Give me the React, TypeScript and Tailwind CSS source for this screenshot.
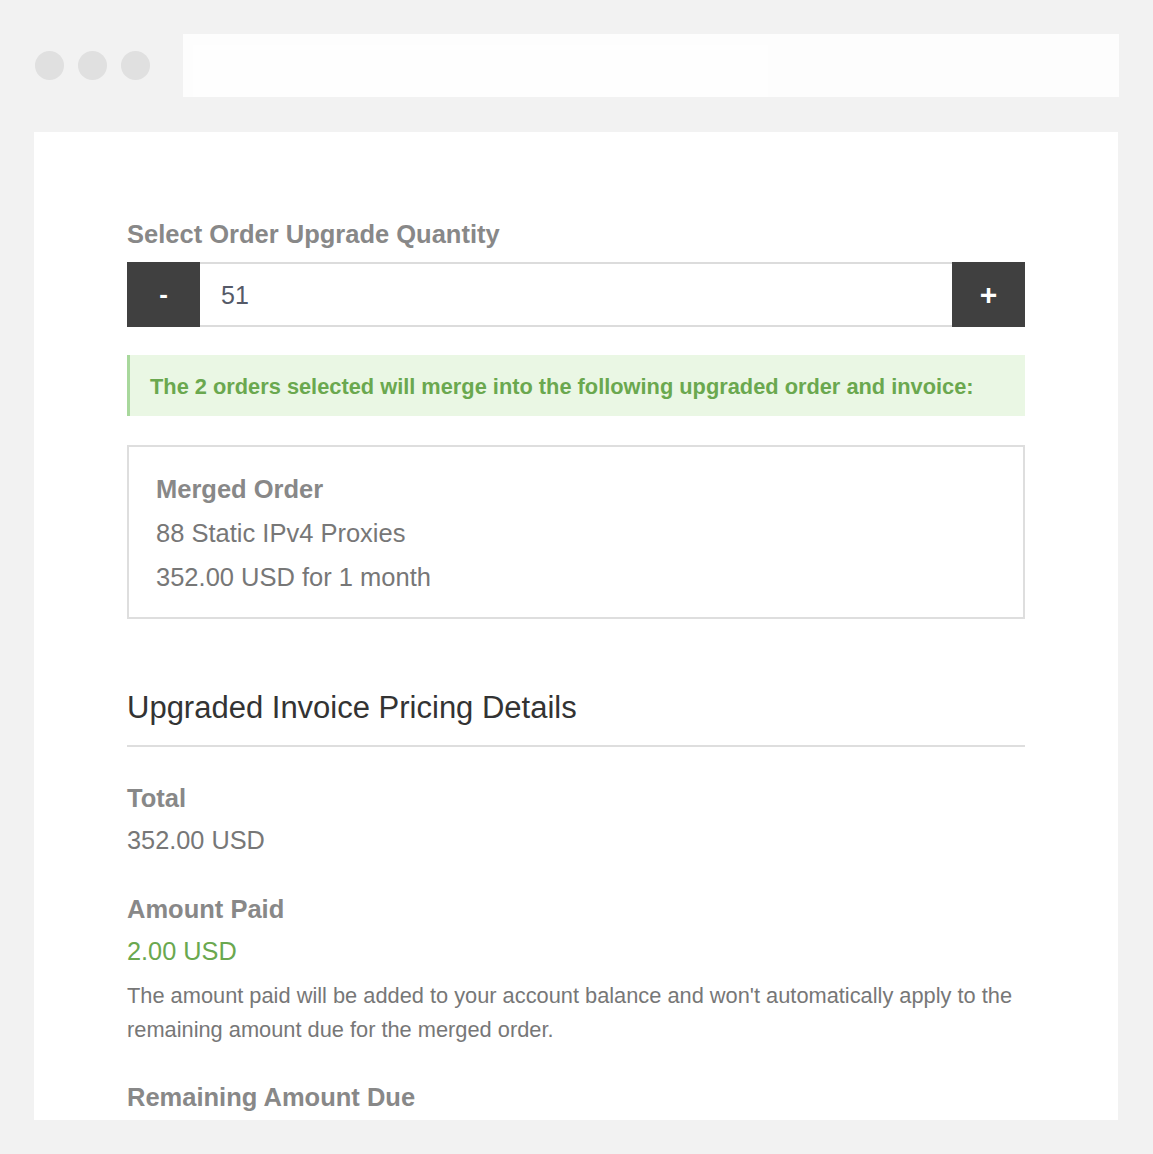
import React from "react";

export default function App() {
  return (
    <div className="min-h-[1154px] w-[1153px] bg-[#f2f2f2] pt-[34px] font-['Liberation_Sans',Arial,sans-serif]">
      <div className="flex items-center h-[63px]">
        <div className="flex items-center gap-[14px] pl-[35px] w-[183px]">
          <div className="w-[29px] h-[29px] rounded-full bg-[#e0e0e0]" />
          <div className="w-[29px] h-[29px] rounded-full bg-[#e0e0e0]" />
          <div className="w-[29px] h-[29px] rounded-full bg-[#e0e0e0]" />
        </div>
        <div className="w-[936px] h-[63px] bg-[#fdfdfd] pt-[11px] pl-[10px]">
          <div className="w-[575px] h-[52px] bg-[#fefefe]" />
        </div>
      </div>
      <div className="ml-[34px] mt-[35px] w-[1084px] h-[988px] bg-white overflow-hidden pl-[93px] pt-[87px]">
        <div className="w-[898px]">
          <div className="text-[25.5px] leading-[30px] font-bold text-[#888]">Select Order Upgrade Quantity</div>
          <div className="mt-[13px] flex h-[65px]">
            <div className="w-[73px] h-full bg-[#404040] flex items-center justify-center text-white text-[26px] font-bold">-</div>
            <div className="flex-1 border-y-2 border-[#dcdcdc] flex items-center pl-[21px] pt-[2px] text-[25px] text-[#555a68]">51</div>
            <div className="w-[73px] h-full bg-[#404040] flex items-center justify-center text-white text-[30px] font-bold">+</div>
          </div>
          <div className="mt-[28px] h-[61px] bg-[#eaf7e4] border-l-[3px] border-[#a8d89c] flex items-center pl-[20px] pt-[3px] text-[21.8px] font-bold text-[#6aa84f]">
            The 2 orders selected will merge into the following upgraded order and invoice:
          </div>
          <div className="mt-[29px] h-[174px] border-2 border-[#dedede] pl-[27px] pt-[20px] text-[25.5px] text-[#777]">
            <div className="font-bold leading-[44px] text-[#888]">Merged Order</div>
            <div className="leading-[44px]">88 Static IPv4 Proxies</div>
            <div className="leading-[44px]">352.00 USD for 1 month</div>
          </div>
          <div className="mt-[69px] text-[31px] leading-[40px] text-[#333]">Upgraded Invoice Pricing Details</div>
          <div className="mt-[17px] h-[2px] bg-[#dedede]" />
          <div className="mt-[34px] text-[25.5px] leading-[34px] font-bold text-[#888]">Total</div>
          <div className="mt-[8px] text-[25.3px] leading-[34px] text-[#777]">352.00 USD</div>
          <div className="mt-[35px] text-[25.5px] leading-[34px] font-bold text-[#888]">Amount Paid</div>
          <div className="mt-[8px] text-[25.3px] leading-[34px] text-[#6aa84f]">2.00 USD</div>
          <div className="mt-[11px] text-[21.8px] leading-[34px] text-[#777]">
            The amount paid will be added to your account balance and won't automatically apply to the remaining amount due for the merged order.
          </div>
          <div className="mt-[33px] text-[25.5px] leading-[34px] font-bold text-[#888]">Remaining Amount Due</div>
        </div>
      </div>
    </div>
  );
}
